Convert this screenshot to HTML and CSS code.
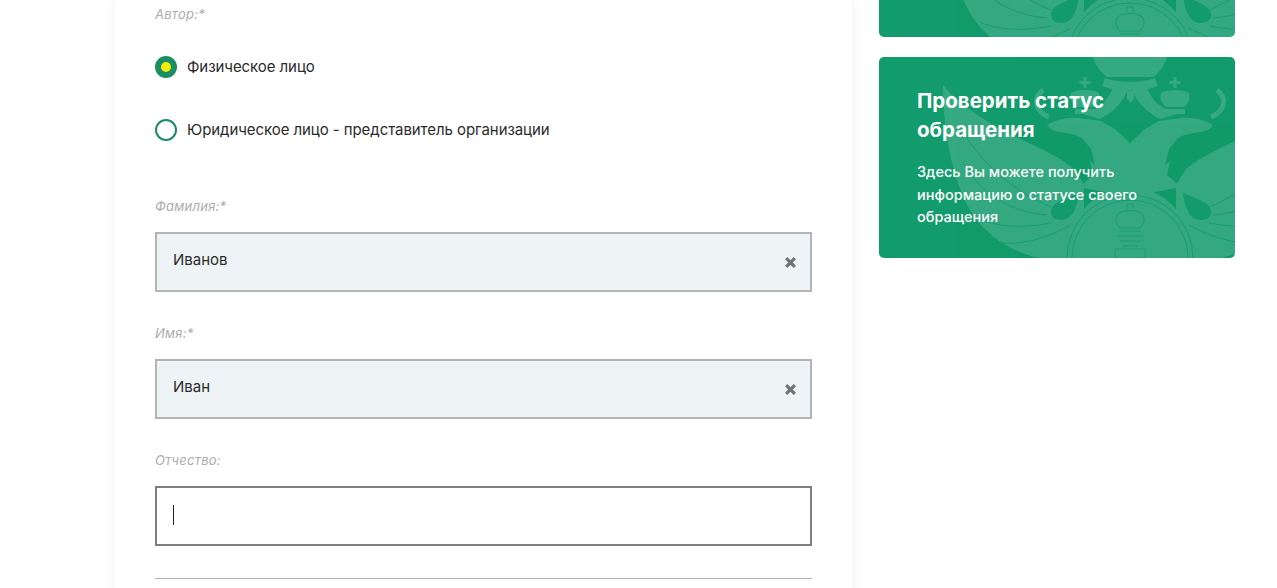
FILE: index.html
```html
<!DOCTYPE html>
<html lang="ru">
<head>
    <meta charset="UTF-8">
    <meta name="viewport" content="width=device-width, initial-scale=1.0">
    <title>Обращение</title>
    <link rel="stylesheet" href="styles.css">
</head>
<body>
    <svg class="defs" width="0" height="0">
        <symbol id="half" viewBox="0 0 356 201" overflow="visible">
            <!-- крыло -->
            <path d="M64 28 C80 48 110 68 150 86 C165 93 180 100 195 112 L205 128 L205 201 L160 201 C130 194 108 178 94 158 C76 130 64 80 64 28 Z"/>
            <!-- голова, шея, перья -->
            <path d="M168 68 C176 63 188 60 200 61 L222 64 L236 72 L251 86 L251 140 L200 130 L214 118 L211 104 L216 108 L212 92 L204 82 C196 76 186 76 180 75 C175 74 171 72 168 68 Z"/>
            <!-- лента от большой короны -->
            <path d="M234 28 C232 42 220 52 204 57 L221 62 C236 54 248 42 249 28 Z"/>
            <!-- малая корона -->
            <path d="M192 36 C198 32 214 32 220 36 C222 42 218 48 215 50 L197 50 C194 48 190 42 192 36 Z"/>
            <path d="M196 52 h20 v5 h-20 Z"/>
            <path d="M204.5 20 h3 v4 h4 v3 h-4 v4 h-3 v-4 h-4 v-3 h4 Z"/>
            <!-- завиток -->
            <path class="hook" d="M164 33 C154 40 155 54 170 60"/>
        </symbol>
        <symbol id="emblem" viewBox="0 0 356 201">
            <g class="emblem-fill">
                <use href="#half"/>
                <use href="#half" transform="translate(502 0) scale(-1 1)"/>
                <!-- большая корона -->
                <path d="M214 0 C216 8 222 16 228 20 L274 20 C280 16 286 8 288 0 Z"/>
                <path d="M226 21 C238 26 264 26 276 21 L279 29 C264 35 238 35 223 29 Z"/>
                <path d="M248 34 L255 34 L255 42 L251.5 46 L248 42 Z"/>
                <!-- щит -->
                <path d="M187 201 C187 164 215 130 251 130 C287 130 315 164 315 201 Z"/>
            </g>
            <g class="emblem-lines">
                <circle cx="251" cy="201" r="63"/>
                <circle cx="251" cy="201" r="58"/>
                <path d="M80 68 C100 105 135 135 172 150"/>
                <path d="M84 105 C100 135 130 155 168 158"/>
                <path d="M100 162 C125 172 150 170 172 166"/>
                <path d="M122 186 C145 188 170 180 192 168"/>
                <path d="M422 68 C402 105 367 135 330 150"/>
                <path d="M418 105 C402 135 372 155 334 158"/>
                <path d="M402 162 C377 172 352 170 330 166"/>
                <path d="M380 186 C357 188 332 180 310 168"/>
                <!-- корона в щите -->
                <path d="M238 158 C242 152 260 152 264 158 C267 164 263 169 261 171 L241 171 C239 169 235 164 238 158 Z"/>
                <path d="M248 152 v-5 h6 v5"/>
                <path d="M241 174 h20 M238 179 h26 M241 184 h20 M243 189 h16"/>
                <path d="M236 192 h30 v9 h-30 Z"/>
            </g>
            <path class="emblem-spot" d="M172 155 C172 146 185 142 200 136 C198 150 194 163 182 163 C176 163 172 160 172 155 Z"/>
            <path class="emblem-spot" d="M332 155 C332 146 319 142 304 136 C306 150 310 163 322 163 C328 163 332 160 332 155 Z"/>
        </symbol>
    </svg>

    <div class="page">
        <div class="form-card">
            <p class="field-label author-label">Автор:*</p>

            <div class="radio-row">
                <span class="radio radio-on"></span>
                <span class="radio-text">Физическое лицо</span>
            </div>
            <div class="radio-row second">
                <span class="radio"></span>
                <span class="radio-text">Юридическое лицо - представитель организации</span>
            </div>

            <p class="field-label surname-label">Фамилия:*</p>
            <div class="input input-filled">
                <span>Иванов</span>
                <svg class="clear" viewBox="0 0 12 12"><path d="M2 2 L10 10 M10 2 L2 10"/></svg>
            </div>

            <p class="field-label">Имя:*</p>
            <div class="input input-filled">
                <span>Иван</span>
                <svg class="clear" viewBox="0 0 12 12"><path d="M2 2 L10 10 M10 2 L2 10"/></svg>
            </div>

            <p class="field-label">Отчество:</p>
            <div class="input input-focus">
                <span class="caret"></span>
            </div>

            <div class="divider"></div>
        </div>

        <div class="sidebar">
            <div class="promo promo-cut">
                <svg class="promo-bg"><use href="#emblem"/></svg>
            </div>
            <div class="promo promo-status">
                <svg class="promo-bg"><use href="#emblem"/></svg>
                <h3>Проверить статус обращения</h3>
                <p>Здесь Вы можете получить информацию о статусе своего обращения</p>
            </div>
        </div>
    </div>
</body>
</html>
```

FILE: styles.css
```css
html, body {
    margin: 0;
    padding: 0;
    height: 588px;
    overflow: hidden;
    background-color: #fff;
    font-family: Inter, Roboto, "Noto Sans", Arial, sans-serif;
    color: #2b2b2b;
}
.defs {
    position: absolute;
}
.page {
    display: flex;
    align-items: flex-start;
    gap: 27px;
    height: 588px;
    padding-left: 115px;
    overflow: hidden;
}

/* форма */
.form-card {
    width: 657px;
    height: 640px;
    padding: 6px 40px 0;
    background-color: #fff;
    box-shadow: 0 0 14px rgba(0,0,0,0.06);
}
.field-label {
    margin: 0 0 18px;
    height: 16px;
    line-height: 16px;
    font-size: 13px;
    font-style: italic;
    letter-spacing: 0.25px;
    color: #adadad;
}
.author-label {
    margin-bottom: 34px;
}
.surname-label {
    margin-top: 57px;
}
.radio-row {
    display: flex;
    align-items: center;
    gap: 10px;
    height: 22px;
    font-size: 15px;
    letter-spacing: -0.07px;
}
.radio-row.second {
    margin-top: 41px;
}
.radio-text {
    margin-top: -2px;
}
.radio {
    box-sizing: border-box;
    width: 22px;
    height: 22px;
    border: 2px solid #1d8a6a;
    border-radius: 50%;
    background-color: #fff;
}
.radio-on {
    border: 6px solid #1a8f63;
    background-color: #f8ea0a;
}
.input {
    box-sizing: border-box;
    display: flex;
    align-items: center;
    justify-content: space-between;
    height: 60px;
    margin-bottom: 33px;
    padding: 0 15px 0 16px;
    border: 2px solid #b4b4b4;
    font-size: 15px;
}
.input-filled {
    background-color: #eef3f6;
}
.input-filled span {
    position: relative;
    top: -3px;
}
.input-focus {
    margin-bottom: 32px;
    border-color: #7f7f7f;
    background-color: #fff;
}
.caret {
    width: 1px;
    height: 20px;
    margin-top: -3px;
    background-color: #222;
}
.clear {
    width: 13px;
    height: 13px;
    margin-right: -2px;
    fill: none;
    stroke: #6f7476;
    stroke-width: 3;
}
.divider {
    border-top: 1px solid #b4b4b4;
}

/* правая колонка */
.sidebar {
    display: flex;
    flex-direction: column;
    gap: 20px;
    width: 356px;
}
.promo {
    position: relative;
    overflow: hidden;
    background-color: #129b6c;
    border-radius: 0 0 5px 5px;
    color: #fff;
}
.promo-cut {
    height: 37px;
}
.promo-cut .promo-bg {
    top: -140px;
}
.promo-status {
    box-sizing: border-box;
    height: 201px;
    padding: 29px 38px 0;
    border-radius: 5px;
}
.promo-bg {
    position: absolute;
    left: 0;
    top: 0;
    width: 356px;
    height: 201px;
}
.emblem-fill {
    fill: #fff;
    opacity: 0.15;
}
.hook {
    fill: none;
    stroke: #fff;
    stroke-width: 5;
}
.emblem-lines {
    fill: none;
    stroke: #129b6c;
    stroke-width: 1;
    opacity: 0.8;
}
.emblem-spot {
    fill: #129b6c;
}
.promo-status h3 {
    position: relative;
    margin: 0 0 17px;
    font-size: 20.5px;
    line-height: 29px;
    font-weight: 700;
}
.promo-status p {
    position: relative;
    margin: 0;
    width: 250px;
    font-size: 14.5px;
    line-height: 22.5px;
    font-weight: 500;
}
```
